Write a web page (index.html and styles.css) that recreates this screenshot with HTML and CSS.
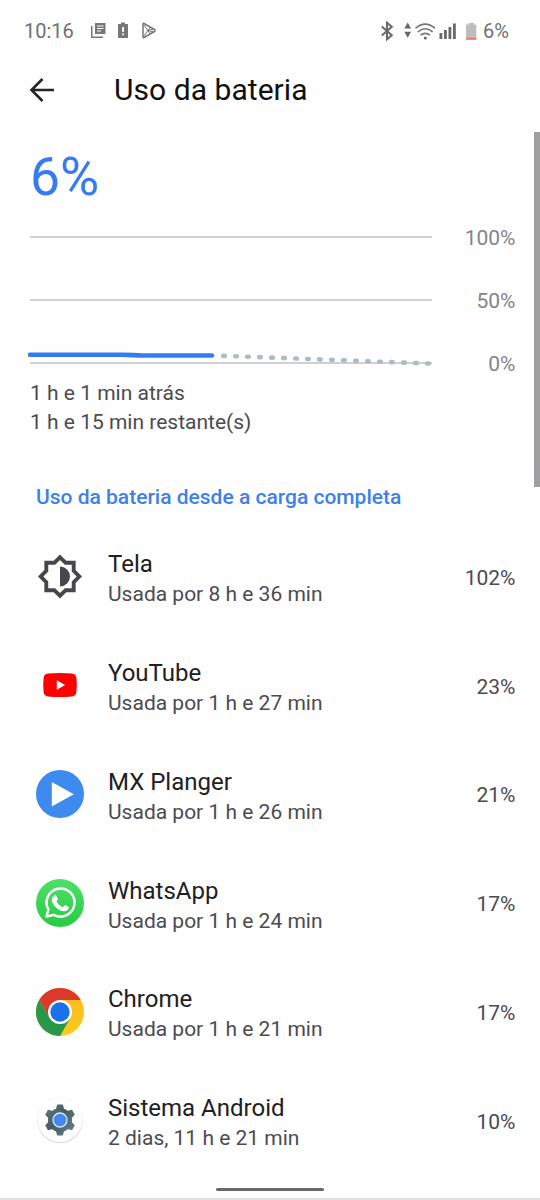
FILE: index.html
```html
<!DOCTYPE html>
<html lang="pt-BR">
<head>
<meta charset="utf-8">
<title>Uso da bateria</title>
<link rel="stylesheet" href="styles.css">
</head>
<body>
<div class="screen">
  <header class="status">
    <span class="clock">10:16</span>
    <svg class="notifications" width="68" height="18" viewBox="0 0 68 18" fill="#777">
      <path d="M4 1h10.500v11H4zM0 4h1.500v10.500H12V16H0z"/>
      <path d="M6 4h6.500M6 6.500h6.500M6 9h4" stroke="#fff" stroke-width="1.100"/>
      <path d="M30 .5h4V2h3v14H27V2h3z"/>
      <path d="M31.200 5h1.800v5h-1.800zM31.200 11.500h1.800v1.800h-1.800z" fill="#fff"/>
      <g fill="none" stroke="#777" stroke-linejoin="round"><path d="M52 2.200Q52 1 53 1.500L63.500 7.500Q65 8.500 63.500 9.500L53 15.500Q52 16 52 14.800z" stroke-width="1.500"/><path d="M52.500 14.500L59 5.500M52.500 2.500L59 11.500M57 8.500l6-1.500M57 8.500l6 1.500" stroke-width="1"/></g>
    </svg>
    <svg class="signals" width="100" height="20" viewBox="0 0 100 20" fill="#686868">
      <path d="M1.800 5.500l10 8.700-4.800 4.100V1.700l4.800 4.100-10 8.700" fill="none" stroke="#686868" stroke-width="2"/>
      <path d="M27.700 1.500l3.400 6h-6.800zM24.300 10.700h6.800l-3.400 6z"/>
      <g fill="none" stroke="#777" stroke-width="1.600"><path d="M35.500 7.200Q45.300 -1 55 7.200M37.800 11Q45.300 4.500 52.700 11M40.500 14.200Q45.300 10.500 50 14.200"/></g><circle cx="45.300" cy="17" r="1.500"/>
      <path d="M59.500 12h2.800v6h-2.800zM64 9h2.800v9H64zM68.500 6h2.800v12h-2.800zM73 2.500h2.800V18H73z"/>
      <path d="M89 2h5v1.500h2.300V19H86V3.500h3z" fill="#bdbdbd"/><path d="M86 16.800h10.300v1.600H86z" fill="#ed766c"/>
    </svg>
    <span class="level">6%</span>
  </header>
  <div class="toolbar">
    <svg width="26" height="26" viewBox="0 0 26 26" fill="none" stroke="#252525" stroke-width="2.600"><path d="M25 13H3M13.500 2L2.500 13l11 11"/></svg>
    <h1 class="title">Uso da bateria</h1>
  </div>
  <main class="content">
    <div class="percent">6%</div>
    <div class="chart">
      <svg width="405" height="136" viewBox="0 0 405 136">
        <path d="M2 5h402M2 68h402M2 131h402" stroke="#d0cfd1" stroke-width="2"/>
        <path d="M2 122.700H94C104 122.700 106 123.500 114 123.500H184" fill="none" stroke="#377bf2" stroke-width="4.600" stroke-linecap="round"/>
        <path d="M195.200 123.800L402 131.600" stroke="#afbbc2" stroke-width="4.600" stroke-linecap="round" stroke-dasharray="1.600 10.400"/>
      </svg>
      <div class="axis"><span>100%</span><span>50%</span><span>0%</span></div>
    </div>
    <div class="times"><div>1 h e 1 min atrás</div><div>1 h e 15 min restante(s)</div></div>
    <h2 class="section">Uso da bateria desde a carga completa</h2>
    <ul class="apps">
      <li class="app">
        <svg class="icon" viewBox="0 0 48 48"><path d="M24 5.300l5.700 5.500h8v8l5.600 5.700-5.600 5.700v8h-8L24 43.700l-5.700-5.500h-8v-8l-5.600-5.700 5.600-5.700v-8h8z" fill="none" stroke="#47464f" stroke-width="3.900"/><path d="M24 14.500a10 10 0 0 1 0 20z" fill="#47464f"/></svg>
        <div class="info"><span class="name">Tela</span><span class="usage">Usada por 8 h e 36 min</span></div><span class="share">102%</span>
      </li>
      <li class="app">
        <svg class="icon" viewBox="0 0 48 48"><path d="M12 12.600Q24 11.400 36 12.600 40 13 40.400 17 41.200 24 40.400 31 40 35 36 35.400 24 36.400 12 35.400 8 35 7.600 31 6.800 24 7.600 17 8 13 12 12.600z" fill="#fe0000"/><path d="M20.800 19.300v9.400l8.300-4.700z" fill="#fff"/></svg>
        <div class="info"><span class="name">YouTube</span><span class="usage">Usada por 1 h e 27 min</span></div><span class="share">23%</span>
      </li>
      <li class="app">
        <svg class="icon" viewBox="0 0 48 48"><circle cx="24" cy="24" r="24" fill="#3d8bee"/><path d="M15.800 12v24.500l22-12.200z" fill="#fff"/></svg>
        <div class="info"><span class="name">MX Planger</span><span class="usage">Usada por 1 h e 26 min</span></div><span class="share">21%</span>
      </li>
      <li class="app">
        <svg class="icon" viewBox="0 0 48 48"><defs><linearGradient id="wa" x2="0" y2="1"><stop stop-color="#4fe06a"/><stop offset="1" stop-color="#27cb43"/></linearGradient></defs><circle cx="24" cy="24" r="24" fill="url(#wa)"/><path d="M10.500 37.500l1.900-7A14 14 0 1 1 18 35.900z" fill="none" stroke="#fff" stroke-width="2.500" stroke-linejoin="round"/><path d="M18.300 16.500c.8-.4 1.800-.4 2.200.5l1.200 2.900c.3.800-.9 1.800-1.300 2.400 1.500 3 3.800 4.800 6.500 5.900.8-.6 1.400-2.100 2.200-2.100l3.300 1.600c.8.400-.1 2.900-1 3.600-2.200 1.700-5 1-7.500-.1-3.600-1.700-6.300-4.900-7.500-7.500-1.100-2.400-.7-5.500 1.900-7.200z" fill="#fff"/></svg>
        <div class="info"><span class="name">WhatsApp</span><span class="usage">Usada por 1 h e 24 min</span></div><span class="share">17%</span>
      </li>
      <li class="app">
        <svg class="icon" viewBox="0 0 48 48"><defs><linearGradient id="yellow" x2="0" y2="1"><stop stop-color="#fbb91b"/><stop offset="1" stop-color="#fccb1e"/></linearGradient></defs><circle cx="24" cy="24" r="24" fill="url(#yellow)"/><path d="M3.220 12A24 24 0 0 1 44.780 12H24L13.600 30z" fill="#dc382c"/><path d="M3.220 12A24 24 0 0 0 24 48L34.400 30 24 36 13.600 30z" fill="#279847"/><circle cx="24" cy="24" r="12" fill="#fff"/><circle cx="24" cy="24" r="9.700" fill="#1b72e8"/></svg>
        <div class="info"><span class="name">Chrome</span><span class="usage">Usada por 1 h e 21 min</span></div><span class="share">17%</span>
      </li>
      <li class="app">
        <svg class="icon" viewBox="0 0 48 48"><defs><linearGradient id="gear" gradientUnits="userSpaceOnUse" x1="9" y1="12" x2="39" y2="36"><stop stop-color="#627981"/><stop offset=".45" stop-color="#465b63"/><stop offset="1" stop-color="#68838b"/></linearGradient></defs><circle cx="24" cy="24.800" r="22.500" fill="#d9d9d9"/><circle cx="24" cy="23.700" r="22.400" fill="#fff" stroke="#eee" stroke-width=".4"/>
          <g fill="url(#gear)"><circle cx="24" cy="24" r="12"/><path d="M21.200 8.500h5.600l1.700 6v19l-1.700 6h-5.600l-1.700-6v-19z"/><path d="M9.180 18.680l2.800-4.850 6.040 1.520 16.460 9.500 4.340 4.470-2.800 4.850-6.040-1.520-16.460-9.500z"/><path d="M38.820 18.680l-2.800-4.850-6.040 1.520-16.460 9.500-4.340 4.470 2.800 4.850 6.040-1.520 16.460-9.500z"/></g>
          <circle cx="24" cy="24" r="7" fill="#4389f3" stroke="#d8e8ff" stroke-width="1.300"/></svg>
        <div class="info"><span class="name">Sistema Android</span><span class="usage">2 dias, 11 h e 21 min</span></div><span class="share">10%</span>
      </li>
    </ul>
  </main>
  <div class="scrollbar"></div>
  <div class="navbar"><div class="handle"></div></div>
</div>
</body>
</html>
```
FILE: styles.css
```css
* { box-sizing: border-box; }
body { margin: 0; background: #fefefe; font-family: Roboto, sans-serif; }
.screen { position: relative; width: 540px; height: 1200px; overflow: hidden; display: flex; flex-direction: column; }
.status { height: 60px; padding: 2px 32px 0 24px; display: flex; align-items: center; color: #707070; font-size: 20px; }
.clock { width: 66.500px; }
.signals { margin-left: auto; }
.level { width: 25px; margin-left: 3px; }
.toolbar { height: 60px; padding-left: 29px; display: flex; align-items: center; gap: 59px; }
.title { margin: 0; font-size: 30px; font-weight: 400; line-height: 60px; letter-spacing: .05px; color: #111; }
.content { height: 1060px; }
.percent { height: 112px; padding: 25px 0 0 30px; font-size: 53.500px; line-height: 64px; color: #377bf2; }
.chart { display: flex; justify-content: space-between; height: 136px; padding: 0 24.500px 0 28px; }
.axis { display: flex; flex-direction: column; justify-content: space-between; height: 150px; margin-top: -6px; font-size: 21px; line-height: 24px; text-align: right; color: #858585; }
.times { padding: 11px 0 0 30px; font-size: 21px; line-height: 28.500px; color: #4c4b50; }
.section { margin: 46px 0 0 36px; font-size: 21px; line-height: 30px; font-weight: 500; color: #417fe9; }
.apps { list-style: none; margin: 10px 0 0; padding: 0; }
.app { height: 108.800px; padding: 0 24.500px 0 36px; display: flex; align-items: center; }
.icon { width: 48px; height: 48px; }
.info { margin-left: 24px; padding-top: 3.500px; display: flex; flex-direction: column; }
.name { font-size: 24px; line-height: 32px; color: #202023; }
.usage { font-size: 21px; line-height: 28px; color: #4c4b50; }
.share { margin-left: auto; padding-top: 3px; font-size: 21px; color: #4c4b50; }
.scrollbar { position: absolute; top: 132px; right: 0; width: 6px; height: 355px; background: #9f9ea3; }
.navbar { position: absolute; left: 0; right: 0; bottom: 0; height: 13px; display: flex; justify-content: center; border-bottom: 2px solid #e0e0e0; }
.handle { width: 108px; height: 3px; margin-top: 1px; border-radius: 2px; background: #69696b; }
```
